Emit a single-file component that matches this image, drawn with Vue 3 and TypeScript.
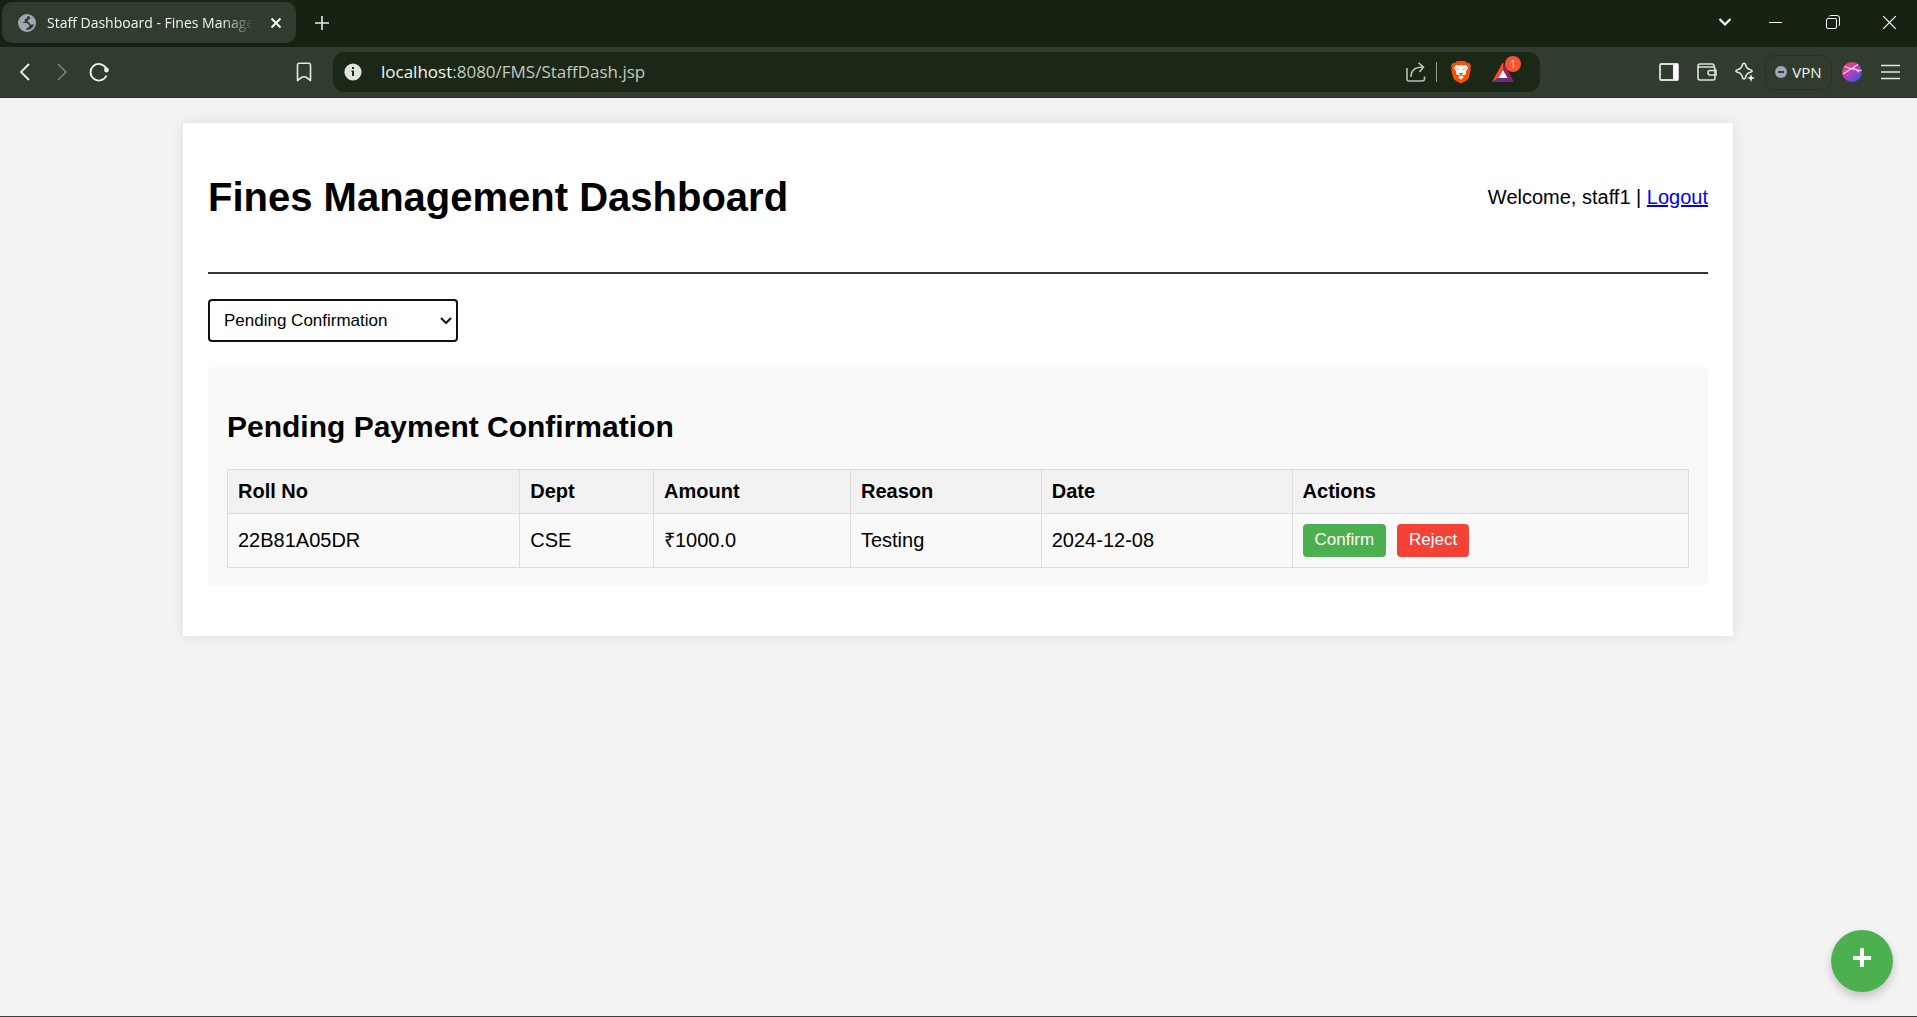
<script setup lang="ts">
import { ref } from 'vue'

interface Fine {
  rollNo: string
  dept: string
  amount: string
  reason: string
  date: string
}

const view = ref('Pending Confirmation')
const columns = ['Roll No', 'Dept', 'Amount', 'Reason', 'Date', 'Actions']
const fines: Fine[] = [
  { rollNo: '22B81A05DR', dept: 'CSE', amount: '₹1000.0', reason: 'Testing', date: '2024-12-08' },
]
</script>

<template>
  <div class="window">
    <header class="chrome">
      <div class="tabstrip">
        <div class="tab">
          <svg class="favicon" width="18" height="18" viewBox="0 0 18 18" aria-hidden="true">
            <circle cx="9" cy="9" r="8" fill="#303c2d" stroke="#a3a8b3" stroke-width="2" />
            <path d="M2 9C2 5 5 1.500 9.500 1.500L9 4 6.500 5.500 7 7.500 4 9h5l2.500 2.500-1 2L8.500 14v3C4 17 1 13 2 9z" fill="#a3a8b3" />
            <path d="M11 1c4 1 6 4 6 8l-2 1.500h-3L11.500 8.500 9.500 7.500l1-2 2-1z" fill="#a3a8b3" />
          </svg>
          <span class="tab-title">Staff Dashboard - Fines Manage</span>
          <button class="tab-close" aria-label="Close tab">
            <svg width="12" height="12" viewBox="0 0 12 12"><path d="M1.500 1.500l9 9M10.500 1.500l-9 9" stroke="#f2f5f0" stroke-width="2" /></svg>
          </button>
        </div>
        <button class="new-tab" aria-label="New tab">
          <svg width="14" height="14" viewBox="0 0 14 14"><path d="M7 0v14M0 7h14" stroke="#e8ebe6" stroke-width="1.600" /></svg>
        </button>
        <div class="window-controls">
          <button class="tab-search" aria-label="Search tabs">
            <svg width="14" height="10" viewBox="0 0 14 10"><path d="M1.500 2L7 7.500 12.500 2" fill="none" stroke="#f2f5f0" stroke-width="2.200" /></svg>
          </button>
          <button aria-label="Minimize">
            <svg width="13" height="13" viewBox="0 0 13 13"><path d="M0 6.500h13" stroke="#fff" /></svg>
          </button>
          <button aria-label="Restore">
            <svg width="14" height="14" viewBox="0 0 14 14" fill="none" stroke="#fff">
              <rect x="0.500" y="3.500" width="10" height="10" rx="1.500" />
              <path d="M3 1.500Q3.500 .5 5 .5h6Q13.500 .5 13.500 3v6q0 1.500-1 2" />
            </svg>
          </button>
          <button class="last" aria-label="Close window">
            <svg width="13" height="13" viewBox="0 0 13 13"><path d="M0 0l13 13M13 0L0 13" stroke="#fff" stroke-width="1.200" /></svg>
          </button>
        </div>
      </div>

      <div class="toolbar">
        <nav class="nav" aria-label="Browser navigation">
          <button aria-label="Back">
            <svg width="20" height="20" viewBox="0 0 20 20"><path d="M14 2L6 10l8 8" fill="none" stroke="#f2f5f0" stroke-width="1.800" /></svg>
          </button>
          <button aria-label="Forward">
            <svg width="20" height="20" viewBox="0 0 20 20"><path d="M6 2l8 8-8 8" fill="none" stroke="#7b8578" stroke-width="1.600" /></svg>
          </button>
          <button aria-label="Reload">
            <svg width="20" height="20" viewBox="0 0 20 20">
              <path d="M17.500 13.500A8.300 8.300 0 1 1 17 6" fill="none" stroke="#f2f5f0" stroke-width="1.800" />
              <circle cx="17.500" cy="8" r="2.400" fill="#f2f5f0" />
            </svg>
          </button>
          <button class="bookmark" aria-label="Bookmark this page">
            <svg width="16" height="20" viewBox="0 0 16 20"><path d="M1.500 18.500V3q0-1.800 1.800-1.800h9.400q1.800 0 1.800 1.800v15.500L10.500 15.500q-2.500-1.500-5 0z" fill="none" stroke="#e4e7e2" stroke-width="1.600" stroke-linejoin="round" /></svg>
          </button>
        </nav>

        <div class="address">
          <button class="site-info" aria-label="Site information">
            <svg width="18" height="18" viewBox="0 0 18 18">
              <circle cx="9" cy="9" r="8.600" fill="#e0e5dc" />
              <path d="M8 4h2v2H8zM7.500 7.500H10V13H8V9h-.5z" fill="#1b2818" />
            </svg>
          </button>
          <span class="url"><span class="host">localhost</span>:8080/FMS/StaffDash.jsp</span>
          <button class="share" aria-label="Share">
            <svg width="20" height="20" viewBox="0 0 20 20" fill="none" stroke="#b9c0b5" stroke-width="1.600">
              <path d="M1 6v11q0 2 2 2h13q2.500 0 2.500-2v-2.500" />
              <path d="M5 15C5 8.500 9 5 17 5M12.500 .8L17.500 5l-4 5" />
            </svg>
          </button>
          <span class="divider"></span>
          <button class="shields" aria-label="Brave Shields">
            <svg width="20" height="24" viewBox="0 0 20 24">
              <path d="M6 1h8l2 2 2-.3 2 3-.7 2.300.4 2-2 8c-.5 2-5 4-7.700 5.500C7.300 22 2.800 20 2.300 18l-2-8 .4-2L0 5.700l2-3L4 3z" fill="#fb4f04" />
              <path d="M5 5l3 .5 2-.5 2 .5L15 5l2.200 3-2.500 3.500.3 2.500-2.500 1.500L10 14l-2.500 1.500L5 14l.3-2.500L2.800 8z" fill="#fff" />
              <path d="M7 17l3-1.500L13 17l-3 2.500z" fill="#fff" />
              <path d="M5 8l3.500 1.200-1.500.6zM15 8l-3.500 1.200 1.500.6zM8 10l1 2.500-1.500 1 2.500 1 2.500-1-1.500-1L12 10l-1 3H9z" fill="#fb4f04" />
            </svg>
          </button>
          <button class="rewards" aria-label="Brave Rewards">
            <svg width="22" height="20" viewBox="0 0 22 20">
              <path d="M11 0L0 20l7-4 4-8z" fill="#ff4724" />
              <path d="M11 0l11 20-7-4-4-8z" fill="#9e1f63" />
              <path d="M0 20h22l-7-4H7z" fill="#662d91" />
              <path d="M11 8l4.500 8h-9z" fill="#fff" />
            </svg>
            <span class="badge">1</span>
          </button>
        </div>

        <div class="tools">
          <button aria-label="Sidebar">
            <svg width="20" height="18" viewBox="0 0 20 18"><rect x="1" y="1" width="18" height="16" rx="1" fill="none" stroke="#d9ded6" stroke-width="1.800" /><path d="M14 1h5v16h-5z" fill="#fff" /></svg>
          </button>
          <button aria-label="Wallet">
            <svg width="20" height="18" viewBox="0 0 20 18" fill="none" stroke="#e0e4dd" stroke-width="1.600">
              <path d="M17 4V3q0-2-2-2H3Q1 1 1 3v12q0 2 2 2h13q2 0 2-2V6q0-2-2-2H1" />
              <path d="M19 7.500h-6q-2 0-2 2.200t2 2.300h6z" />
            </svg>
          </button>
          <button aria-label="Leo AI">
            <svg width="20" height="20" viewBox="0 0 20 20">
              <path d="M9 1.200q1.200 0 1.500 1.500Q11.300 6.800 15.500 7.700q1.600.3 1.600 1.300t-1.600 1.300Q11.300 11.200 10.500 15.500q-.3 1.500-1.500 1.500t-1.500-1.500Q6.700 11.200 2.500 10.300.9 10 .9 9t1.600-1.300Q6.700 6.800 7.500 2.700 7.800 1.200 9 1.200z" fill="none" stroke="#e4e7e2" stroke-width="1.600" />
              <path d="M16 12l1 3 3 1-3 1-1 3-1-3-3-1 3-1z" fill="#fff" />
            </svg>
          </button>
          <button class="vpn">
            <svg width="12" height="12" viewBox="0 0 12 12" aria-hidden="true"><circle cx="6" cy="6" r="6" fill="#a0a5b8" /><path d="M3 6h6" stroke="#303c2d" stroke-width="2" /></svg>
            VPN
          </button>
          <button aria-label="Profile">
            <svg width="20" height="20" viewBox="0 0 20 20">
              <defs>
                <linearGradient id="avatar" x1="0.100" y1="0.100" x2="0.800" y2="0.900"><stop offset="0" stop-color="#f0436b" /><stop offset="0.500" stop-color="#b83dc0" /><stop offset="1" stop-color="#4a50d8" /></linearGradient>
              </defs>
              <circle cx="10" cy="10" r="10" fill="url(#avatar)" />
              <path d="M1 12L16 2.500M2.500 4.500Q9 7 19.500 8.500M11 6q4 2 6 4" fill="none" stroke="#fbd9ef" stroke-width="1.200" />
            </svg>
          </button>
          <button aria-label="Menu">
            <svg width="19" height="16" viewBox="0 0 19 16"><path d="M0 1.500h19M0 8h19M0 14.500h19" stroke="#e4e7e2" stroke-width="1.600" /></svg>
          </button>
        </div>
      </div>
    </header>

    <main class="page">
      <div class="container">
        <div class="header">
          <h1>Fines Management Dashboard</h1>
          <div>Welcome, staff1 | <a href="#logout">Logout</a></div>
        </div>

        <div class="view-select">
          <select v-model="view" aria-label="Section">
            <option>Pending Confirmation</option>
            <option>Pending Fines</option>
            <option>Paid Fines</option>
          </select>
          <svg class="arrow" width="12" height="8" viewBox="0 0 12 8" aria-hidden="true"><path d="M1 1l5 5 5-5" fill="none" stroke="#111" stroke-width="2" /></svg>
        </div>

        <section class="section">
          <h2>Pending Payment Confirmation</h2>
          <table>
            <colgroup>
              <col class="c-roll" />
              <col class="c-dept" />
              <col class="c-amount" />
              <col class="c-reason" />
              <col class="c-date" />
              <col />
            </colgroup>
            <thead>
              <tr>
                <th v-for="name in columns" :key="name" scope="col">{{ name }}</th>
              </tr>
            </thead>
            <tbody>
              <tr v-for="fine in fines" :key="fine.rollNo">
                <td>{{ fine.rollNo }}</td>
                <td>{{ fine.dept }}</td>
                <td>{{ fine.amount }}</td>
                <td>{{ fine.reason }}</td>
                <td>{{ fine.date }}</td>
                <td>
                  <div class="actions">
                    <button class="confirm">Confirm</button>
                    <button class="reject">Reject</button>
                  </div>
                </td>
              </tr>
            </tbody>
          </table>
        </section>
      </div>
      <button class="fab" aria-label="Add fine">+</button>
    </main>
  </div>
</template>

<style>
body {
  margin: 0;
  background: #f3f3f3;
}
</style>

<style scoped>
* {
  box-sizing: border-box;
}

button {
  margin: 0;
  padding: 0;
  border: 0;
  background: none;
  font: inherit;
  color: inherit;
}

svg {
  display: block;
  flex: none;
}

.window {
  display: flex;
  flex-direction: column;
  min-height: 100vh;
  border-bottom: 1px solid #3f3f3f;
}

.chrome {
  font-family: 'Open Sans', 'Noto Sans', sans-serif;
  color: #f2f5f0;
}

.chrome button {
  display: flex;
  align-items: center;
  justify-content: center;
}

.tabstrip {
  display: flex;
  height: 47px;
  padding: 2px 0 0 2px;
  background: #162313;
}

.tab {
  display: flex;
  align-items: center;
  width: 294px;
  height: 41px;
  padding: 0 15px 0 16px;
  border-radius: 10px;
  background: #303c2d;
}

.tab-title {
  flex: 1;
  margin-left: 11px;
  font-size: 14px;
  line-height: 20px;
  white-space: nowrap;
  mask-image: linear-gradient(to right, #000 calc(100% - 32px), transparent);
}

.tab-close {
  width: 12px;
  height: 24px;
  margin-left: 16px;
}

.new-tab {
  width: 51px;
  height: 41px;
}

.window-controls {
  display: flex;
  height: 40px;
  margin-left: auto;
}

.window-controls button {
  width: 57px;
}

.window-controls .tab-search {
  width: 44px;
}

.window-controls .last {
  width: 56px;
}

.toolbar {
  display: flex;
  align-items: center;
  height: 51px;
  border-bottom: 1px solid #283225;
  background: #303c2d;
}

.nav {
  display: flex;
  width: 333px;
  padding: 0 11px 0 6px;
}

.nav button {
  width: 37px;
  height: 40px;
}

.nav .bookmark {
  margin-left: auto;
}

.address {
  display: flex;
  flex: 1;
  align-items: center;
  height: 40px;
  padding: 0 26px 0 11px;
  border-radius: 12px;
  background: #1b2818;
}

.url {
  flex: 1;
  margin-left: 19px;
  font-size: 17px;
  line-height: 24px;
  color: #c3cabf;
}

.host {
  color: #f4f6f2;
}

.divider {
  width: 1px;
  height: 20px;
  margin: 0 14px 0 10px;
  background: #929a8f;
}

.rewards {
  position: relative;
  margin-left: 21px;
}

.badge {
  position: absolute;
  top: -6px;
  right: -7px;
  width: 16px;
  height: 16px;
  border-radius: 8px;
  background: #fb542b;
  font-size: 10px;
  line-height: 16px;
  text-align: center;
}

.tools {
  display: flex;
  align-items: center;
  justify-content: flex-end;
  width: 377px;
  padding-right: 8px;
}

.tools button {
  width: 38px;
  height: 35px;
}

.tools .vpn {
  gap: 5px;
  width: 67px;
  margin: 0 1px;
  border: 1px solid #283225;
  border-radius: 10px;
  font-size: 15px;
}

.page {
  flex: 1;
  padding: 25px 1px 25px 0;
  background: #f3f3f3;
  font-family: 'Liberation Sans', Arial, sans-serif;
  font-size: 20px;
  line-height: 23px;
  color: #000;
}

.container {
  max-width: 1550px;
  margin: 0 auto;
  padding: 25px;
  background: #fff;
  box-shadow: 0 0 12px rgba(0, 0, 0, 0.1);
}

.header {
  display: flex;
  align-items: center;
  justify-content: space-between;
  padding-bottom: 25px;
  border-bottom: 2px solid #333;
}

h1 {
  margin: 27px 0;
  font-size: 40px;
  line-height: 45px;
}

a {
  color: #0000ee;
}

.view-select {
  position: relative;
  width: 250px;
  margin: 25px 0;
}

select {
  display: block;
  width: 100%;
  height: 43px;
  padding: 0 24px 0 14px;
  border: 2px solid #101010;
  border-radius: 4px;
  background: #fff;
  font-family: inherit;
  font-size: 17px;
  color: #000;
  appearance: none;
}

.arrow {
  position: absolute;
  top: 18px;
  right: 6px;
  pointer-events: none;
}

.section {
  margin-bottom: 25px;
  padding: 19px 19px 18px;
  border-radius: 6px;
  background: #f9f9f9;
}

h2 {
  margin: 24px 0 25px;
  font-size: 30px;
  line-height: 34px;
}

table {
  width: 100%;
  border-collapse: collapse;
  table-layout: fixed;
}

.c-roll {
  width: 20%;
}

.c-dept {
  width: 9.16%;
}

.c-amount {
  width: 13.48%;
}

.c-reason {
  width: 13.06%;
}

.c-date {
  width: 17.17%;
}

th,
td {
  padding: 10px;
  border: 1px solid #ddd;
  text-align: left;
}

th {
  background: #f2f2f2;
}

.actions {
  display: flex;
  gap: 11px;
}

.actions button {
  height: 33px;
  padding: 0 12px 2px;
  border-radius: 4px;
  font-size: 17px;
  line-height: 19px;
  color: #fff;
}

.actions .confirm {
  background: #4caf50;
}

.actions .reject {
  background: #f44336;
}

.fab {
  position: fixed;
  right: 24px;
  bottom: 25px;
  width: 62px;
  height: 62px;
  padding-bottom: 6px;
  border-radius: 50%;
  background: #4caf50;
  box-shadow: 0 5px 10px rgba(0, 0, 0, 0.2);
  font-size: 36px;
  font-weight: bold;
  line-height: 40px;
  color: #fff;
}
</style>
